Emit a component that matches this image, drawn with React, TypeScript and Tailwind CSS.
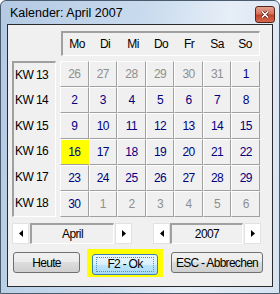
import type { ReactNode } from 'react';

const NARROW = {
  fontFamily: '"Liberation Sans", Arial, sans-serif',
  letterSpacing: '-0.6px',
};

const WEEKS: { kw: number; days: { d: number; cur: boolean }[] }[] = [
  { kw: 13, days: [26, 27, 28, 29, 30, 31].map((d) => ({ d, cur: false })).concat([{ d: 1, cur: true }]) },
  { kw: 14, days: [2, 3, 4, 5, 6, 7, 8].map((d) => ({ d, cur: true })) },
  { kw: 15, days: [9, 10, 11, 12, 13, 14, 15].map((d) => ({ d, cur: true })) },
  { kw: 16, days: [16, 17, 18, 19, 20, 21, 22].map((d) => ({ d, cur: true })) },
  { kw: 17, days: [23, 24, 25, 26, 27, 28, 29].map((d) => ({ d, cur: true })) },
  { kw: 18, days: [{ d: 30, cur: true }].concat([1, 2, 3, 4, 5, 6].map((d) => ({ d, cur: false }))) },
];

const DAYS = ['Mo', 'Di', 'Mi', 'Do', 'Fr', 'Sa', 'So'];

function Arrow({ dir }: { dir: 'left' | 'right' }) {
  return (
    <div className="w-[17px] h-[21px] flex items-center justify-center bg-white border border-[#e2e2e2]">
      <svg width="4" height="7" viewBox="0 0 4 7">
        {dir === 'left' ? <polygon points="4,0 4,7 0,3.5" fill="#000" /> : <polygon points="0,0 0,7 4,3.5" fill="#000" />}
      </svg>
    </div>
  );
}

function Field({ w, children }: { w: string; children: ReactNode }) {
  return (
    <div
      className={`${w} h-[21px] flex items-center justify-center text-[12px] text-black border-t-2 border-l-2 border-[#a0a0a0] border-b border-r border-b-white border-r-white bg-[#f0f0f0]`}
    >
      {children}
    </div>
  );
}

function VistaButton({ w, focused, children }: { w: string; focused?: boolean; children: ReactNode }) {
  return (
    <div
      className={`${w} h-[21px] rounded-[3px] border flex items-center justify-center whitespace-nowrap text-[12px] tracking-[-0.7px] text-black ${
        focused
          ? 'border-[#3c7fb1] bg-[linear-gradient(#eaf6fd_0%,#d9f0fc_50%,#bee6fd_50%,#a7d9f5_100%)]'
          : 'border-[#707070] bg-[linear-gradient(#f2f2f2_0%,#ebebeb_50%,#dddddd_50%,#cfcfcf_100%)]'
      }`}
    >
      {focused ? (
        <div className="w-[calc(100%-6px)] h-[15px] border border-dotted border-[#5a8fb8] flex items-center justify-center">
          {children}
        </div>
      ) : (
        children
      )}
    </div>
  );
}

export default function App() {
  return (
    <div className="w-[280px] h-[294px] border border-[#4a5b6e] rounded-t-[6px] overflow-hidden relative bg-[linear-gradient(100deg,#b3cae3_0%,#c9dbee_45%,#e6eef7_70%,#d6e3f1_100%)]">
      {/* title bar */}
      <div className="h-[23px] flex items-center pl-[9px] pt-[1px]">
        <span className="text-[12.5px] text-black" style={{ fontFamily: '"Liberation Sans", Arial, sans-serif' }}>
          Kalender: April 2007
        </span>
      </div>
      <div className="absolute left-[254px] top-[5px] w-[20px] h-[17px] rounded-[3px] border border-[#5b2418] bg-[linear-gradient(#e3a08f_0%,#d5735c_45%,#c2412a_55%,#d46a4f_100%)] flex items-center justify-center">
        <svg width="8" height="7" viewBox="0 0 8 7">
          <path d="M1 0.5 L7 6.5 M7 0.5 L1 6.5" stroke="#4a1a10" strokeWidth="3" />
          <path d="M1 0.5 L7 6.5 M7 0.5 L1 6.5" stroke="#fff" strokeWidth="1.6" />
        </svg>
      </div>

      {/* client area */}
      <div className="ml-[6px] w-[266px] h-[263px] border border-[#2b2b2b] bg-[#f0f0f0]" style={NARROW}>
        <div className="pl-[4px] pt-[6px]">
          {/* header */}
          <div className="flex">
            <div className="w-[49px]" />
            <div className="w-[199px] h-[25px] border-t-2 border-l-2 border-[#a0a0a0] border-b border-r border-b-white border-r-white grid grid-cols-7 items-center text-[12px] text-black">
              {DAYS.map((d) => (
                <div key={d} className="text-center">
                  {d}
                </div>
              ))}
            </div>
          </div>

          {/* weeks + days */}
          <div className="flex gap-[4px] mt-[5px]">
            <div className="w-[44px] shrink-0 h-[156px] border-t-2 border-l-2 border-[#a0a0a0] border-b border-r border-b-white border-r-white flex flex-col text-[12px] text-black whitespace-nowrap">
              {WEEKS.map((w, i) => (
                <div key={w.kw} className={`${i === 0 ? 'h-[24px]' : 'h-[26px]'} flex items-center pl-[1px]`}>
                  KW {w.kw}
                </div>
              ))}
            </div>
            <div className="w-[200px] shrink-0 grid grid-cols-7">
              {WEEKS.flatMap((w) =>
                w.days.map((day, i) => {
                  const today = day.cur && day.d === 16;
                  return (
                    <div
                      key={`${w.kw}-${i}`}
                      className={`h-[26px] flex items-center justify-center text-[12px] border-t border-l border-white border-r border-b ${
                        today ? 'bg-[#ffff00] border-r-[#ffff00] border-b-[#a0a0a0]' : 'border-r-[#a0a0a0] border-b-[#a0a0a0]'
                      } ${day.cur ? 'text-[#000080]' : 'text-[#8f8f8f]'}`}
                    >
                      {day.d}
                    </div>
                  );
                })
              )}
            </div>
          </div>

          {/* month / year spinners */}
          <div className="flex items-center mt-[6px]">
            <Arrow dir="left" />
            <div className="w-[1px]" />
            <Field w="w-[84px]">April</Field>
            <div className="w-[1px]" />
            <Arrow dir="right" />
            <div className="w-[21px]" />
            <Arrow dir="left" />
            <Field w="w-[73px]">2007</Field>
            <div className="w-[1px]" />
            <Arrow dir="right" />
          </div>

          {/* buttons */}
          <div className="flex items-center mt-[8px]">
            <div className="w-[1px]" />
            <VistaButton w="w-[67px]">Heute</VistaButton>
            <div className="w-[7px]" />
            <div className="bg-[#ffff00] px-[5px] pt-[5px] pb-[2px] -my-[4px]">
              <VistaButton w="w-[66px]" focused>
                F2 - Ok
              </VistaButton>
            </div>
            <div className="w-[8px]" />
            <VistaButton w="w-[92px]">ESC - Abbrechen</VistaButton>
          </div>
        </div>
      </div>
    </div>
  );
}
